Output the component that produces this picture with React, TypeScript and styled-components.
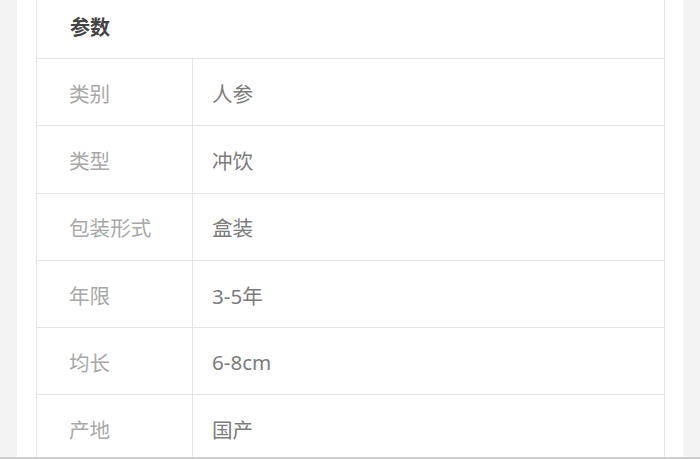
import React from "react";
import styled, { createGlobalStyle } from "styled-components";

const Global = createGlobalStyle`
  html, body {
    margin: 0;
    padding: 0;
    height: 459px;
    overflow: hidden;
    background: #f3f3f3;
    font-family: "Noto Sans", "Noto Sans CJK SC", sans-serif;
  }
`;

const Page = styled.div`
  margin: 0 17px;
  height: 459px;
  background: #ffffff;
  padding: 0 18px 0 19px;
  box-sizing: border-box;
  overflow: hidden;
`;

const Table = styled.div`
  border-left: 1px solid #e6e4e8;
  border-right: 1px solid #e6e4e8;
`;

const HeaderRow = styled.div`
  height: 59px;
  box-sizing: border-box;
  border-bottom: 1px solid #e6e4e8;
  display: flex;
  align-items: center;
  padding-left: 33px;
  padding-bottom: 5px;
  font-size: 20px;
  font-weight: 700;
  color: #444444;
`;

const Row = styled.div`
  display: grid;
  grid-template-columns: 156px 1fr;
  height: 67.3px;
  box-sizing: border-box;
  border-bottom: 1px solid #e6e4e8;
`;

const Cell = styled.div<{ $label?: boolean }>`
  display: flex;
  align-items: center;
  padding-top: 1px;
  font-size: 20.6px;
  padding-left: ${(p) => (p.$label ? "32px" : "19px")};
  color: ${(p) => (p.$label ? "#a8a8a8" : "#7c7c7c")};
  border-right: ${(p) => (p.$label ? "1px solid #e6e4e8" : "none")};
`;

const BottomLine = styled.div`
  position: fixed;
  left: 0;
  right: 0;
  bottom: 0;
  height: 2px;
  background: #cfcfcf;
`;

const rows: [string, string][] = [
  ["类别", "人参"],
  ["类型", "冲饮"],
  ["包装形式", "盒装"],
  ["年限", "3-5年"],
  ["均长", "6-8cm"],
  ["产地", "国产"],
];

export default function App() {
  return (
    <>
      <Global />
      <Page>
        <Table>
          <HeaderRow>参数</HeaderRow>
          {rows.map(([k, v]) => (
            <Row key={k}>
              <Cell $label>{k}</Cell>
              <Cell>{v}</Cell>
            </Row>
          ))}
        </Table>
      </Page>
      <BottomLine />
    </>
  );
}
